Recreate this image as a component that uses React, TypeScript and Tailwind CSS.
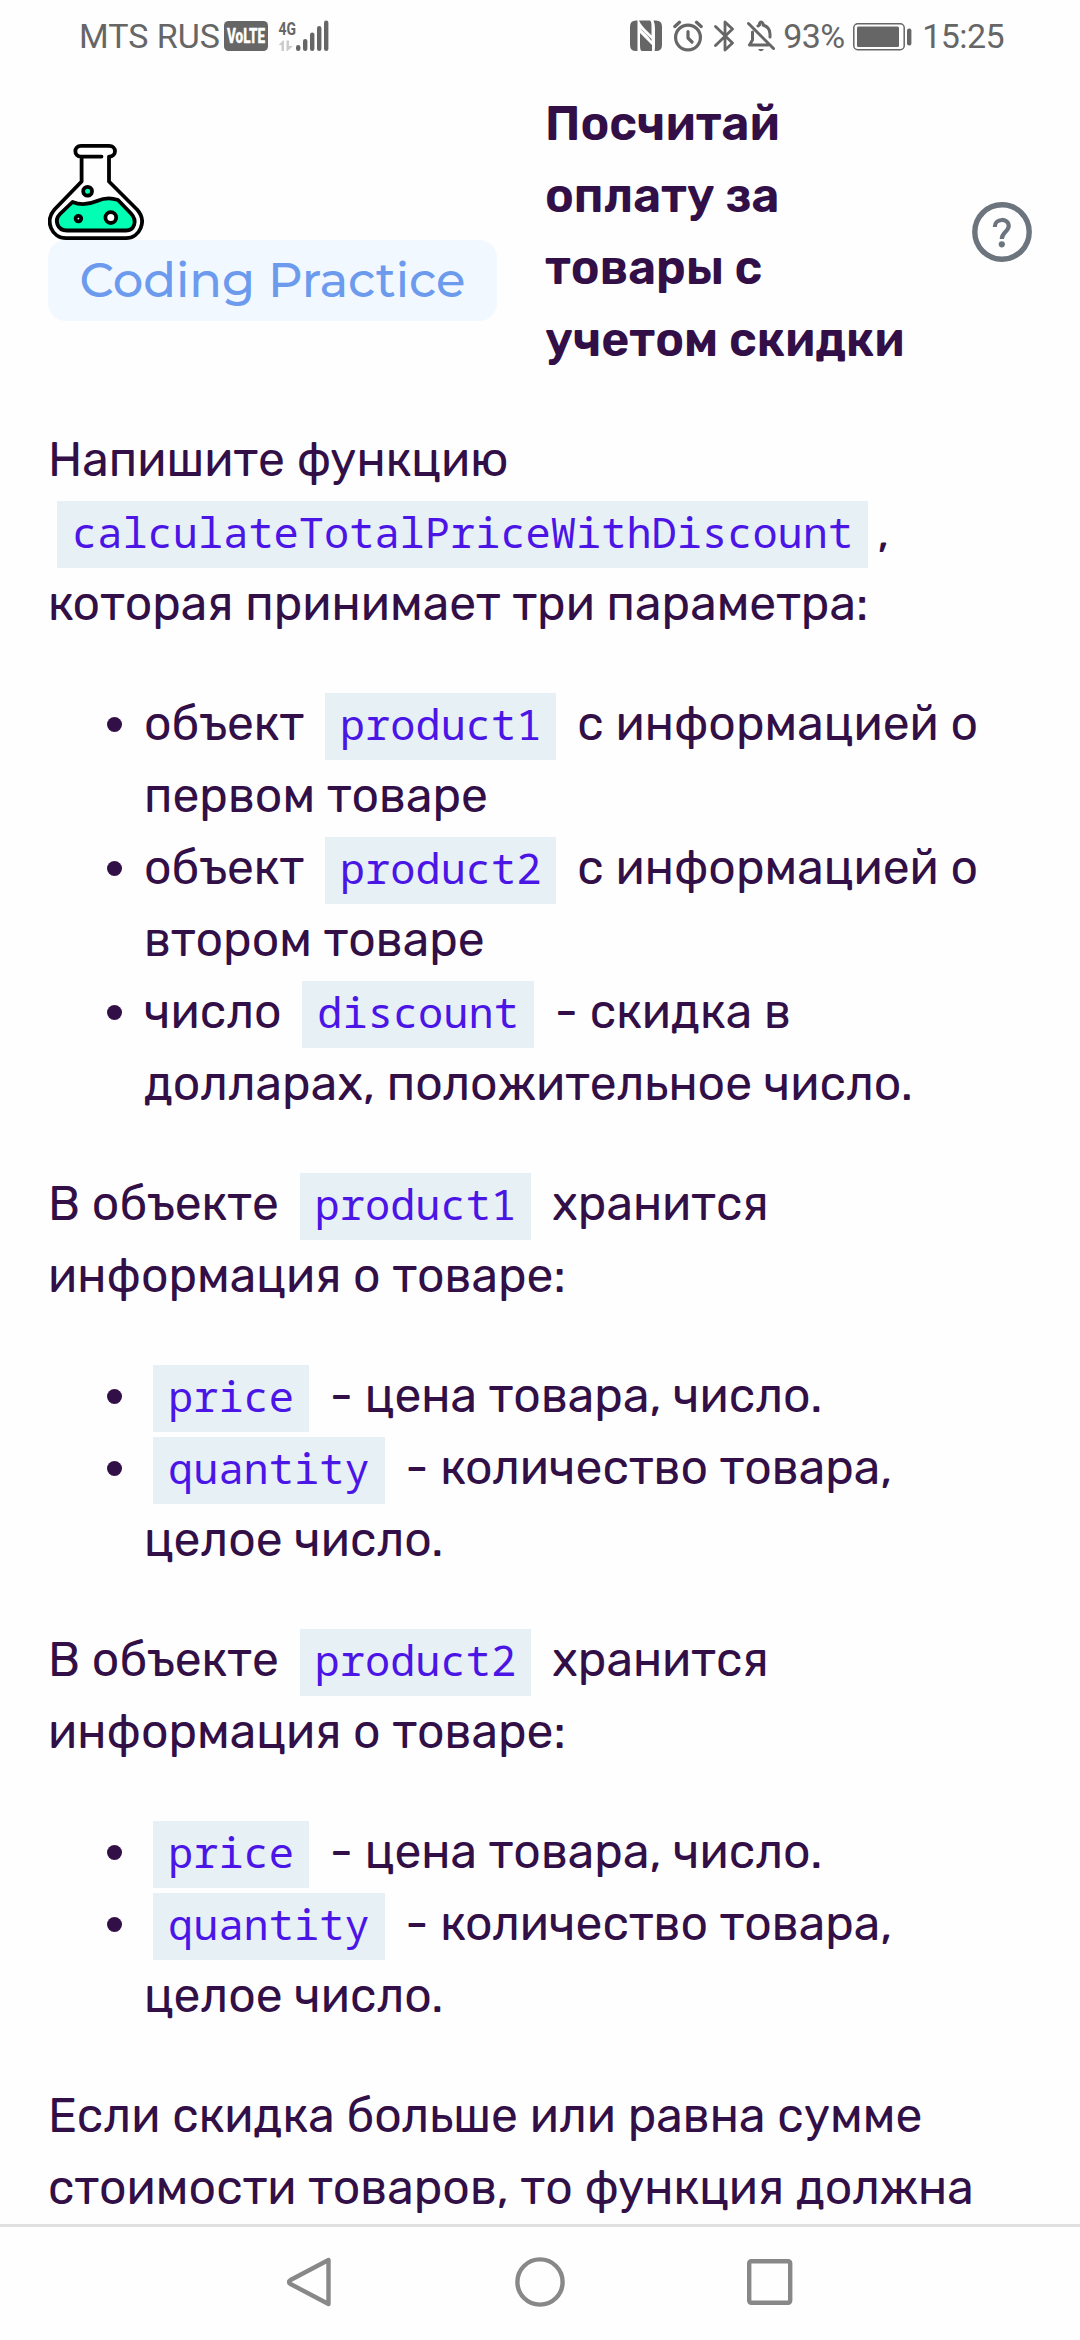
function Code({ children }: { children: string }) {
  return (
    <code className="mx-[9px] bg-[#e7f0f5] px-[15px] pt-[2px] pb-[8px] font-['Noto_Sans_Mono','DejaVu_Sans_Mono',monospace] text-[42px] leading-none text-[#4b15e6]">
      {children}
    </code>
  );
}

function FlaskIcon() {
  return (
    <svg className="h-24 w-24" viewBox="0 0 96 96" fill="none" stroke="#000" strokeWidth="3.8" strokeLinecap="round" strokeLinejoin="round">
      <path d="M24.5 58C34 62 42 60 49 57C57 53.5 63 53.5 70 56L83 69.5C90 77 86 86.5 78 86.5H19C9 86.5 6 76 12 70Z" fill="#00ffb2" />
      <path d="M53.5 12.6H33C25.5 12.6 25.5 1.9 33 1.9H61C69 1.9 69 12.6 61 12.6V37.5L89 65.5C99.5 77 92 94.1 78 94.1H18C3.5 94.1 -3.5 77 6.5 65.5L33.6 37.5V12.6" />
      <circle cx="39.6" cy="47.2" r="4.4" fill="#00ffb2" />
      <circle cx="30.4" cy="74.6" r="2.8" fill="#fff" />
      <circle cx="62.8" cy="73.6" r="5.4" fill="#fff" />
    </svg>
  );
}

function StatusBar() {
  return (
    <div className="flex h-[72px] shrink-0 items-center justify-between pr-[76px] pl-[79px] font-['Roboto',sans-serif] text-[34px] text-[#666]">
      <div className="flex h-full items-center">
        <span className="w-[145px] whitespace-nowrap">MTS RUS</span>
        <svg className="h-[30px] w-[44px]" viewBox="0 0 44 30">
          <rect width="44" height="30" rx="4.5" fill="#666" />
          <text x="3" y="22" fill="#fff" stroke="#fff" strokeWidth="0.4" fontFamily="Roboto" fontWeight="800" fontSize="19.5" textLength="38" lengthAdjust="spacingAndGlyphs">VoLTE</text>
        </svg>
        <svg className="ml-[10px] h-[32px] w-[52px] overflow-visible" viewBox="0 0 52 32" fill="#666">
          <text x="0.5" y="14.5" fontFamily="Roboto" fontWeight="700" fontSize="18.5" textLength="17.5" lengthAdjust="spacingAndGlyphs">4G</text>
          <path d="M0.5 25L5 20.5H6V31H3.5V25ZM8.5 20.5H11V26H15L9.5 31H8.5Z" fill="#ccc" />
          <rect x="18" y="25" width="4.4" height="6" rx="2.2" />
          <rect x="25" y="19" width="4.4" height="12" rx="2.2" />
          <rect x="32" y="12.5" width="4.4" height="18.5" rx="2.2" />
          <rect x="39" y="6" width="4.4" height="25" rx="2.2" />
          <rect x="46" y="0.5" width="4.4" height="30.5" rx="2.2" />
        </svg>
      </div>
      <div className="flex h-full items-center">
        <svg className="h-[32px] w-[32px]" viewBox="0 0 32 32" fill="#666">
          <path d="M6 0.5H7.5V31H6Q0 31 0 25V6.5Q0 0.5 6 0.5Z" />
          <path d="M9 0.5C11.5 6 15 8.5 21.5 15.5V6C21.5 3 21 1.500 20 0.5Z" />
          <path d="M10 8C13 12 18 15 21.5 21V19L10 8ZM10 13L22 25V31H12Q10 31 10 25Z" />
          <path d="M23.5 0.5H26Q32 0.5 32 6.5V25Q32 31 26 31H24.5Q25 30 25 25V8Q25 4 23.5 0.5Z" />
        </svg>
        <svg className="ml-[11px] h-[32px] w-[30px]" viewBox="0 0 30 32" fill="none" stroke="#666" strokeWidth="3.2" strokeLinecap="round" strokeLinejoin="round">
          <circle cx="15" cy="17.5" r="12.4" />
          <path d="M15 11.5V18L19 22M1.8 6.5L6.5 2.3M28.2 6.5L23.5 2.3" />
        </svg>
        <svg className="ml-[11px] h-[32px] w-[21px]" viewBox="0 0 21 32" fill="none" stroke="#666" strokeWidth="2.8" strokeLinecap="round" strokeLinejoin="round">
          <path d="M1.5 6.5L18.5 23L11 30V2L18.5 9L1.5 25.5" />
        </svg>
        <svg className="ml-[12px] h-[32px] w-[28px]" viewBox="0 0 28 32" fill="none" stroke="#666" strokeWidth="3" strokeLinecap="round" strokeLinejoin="round">
          <path d="M1.5 3.5L26.5 28.5M5.5 12V20L2.5 25H21M11 6L12.5 5V3.5Q14 0.5 16 3.5V5C21 6.5 23 9.5 23 14V17" />
          <path d="M11 29H17Q14 33.5 11 29Z" fill="#666" stroke="none" />
        </svg>
        <span className="ml-[8px] w-[70px] tracking-[-0.6px]">93%</span>
        <svg className="h-[32px] w-[59px]" viewBox="0 0 59 32">
          <rect x="0.8" y="3.8" width="50.4" height="25.9" rx="4" fill="none" stroke="#666" strokeWidth="1.5" />
          <rect x="4" y="6.5" width="42" height="20.5" rx="1.5" fill="#666" />
          <rect x="54" y="8.5" width="4.4" height="17" rx="2" fill="#666" />
        </svg>
        <span className="ml-[10px] tracking-[-0.6px]">15:25</span>
      </div>
    </div>
  );
}

function ProductInfo({ name }: { name: string }) {
  return (
    <>
      <p>
        В объекте <Code>{name}</Code> хранится
        <br />
        информация о товаре:
      </p>
      <ul className="list-disc pl-24">
        <li>
          <Code>price</Code> - цена товара, число.
        </li>
        <li>
          <Code>quantity</Code> - количество товара,
          <br />
          целое число.
        </li>
      </ul>
    </>
  );
}

export default function App() {
  return (
    <div className="flex h-[2340px] w-[1080px] flex-col overflow-hidden bg-[#fefefe] font-['Rubik','Roboto',sans-serif] text-[48px] leading-[72px] text-[#321047]">
      <StatusBar />
      <main className="flex min-h-0 flex-1 flex-col overflow-hidden px-12 pt-4">
        <header className="flex shrink-0 items-center">
          <div className="w-[449px] shrink-0">
            <FlaskIcon />
            <div className="flex h-[81px] items-center justify-center rounded-[18px] bg-[#f2f8ff] font-['Montserrat','Inter',sans-serif] font-medium whitespace-nowrap text-[#6c9bee]">
              Coding Practice
            </div>
          </div>
          <h1 className="ml-12 flex-1 font-semibold">
            Посчитай
            <br />
            оплату за
            <br />
            товары с
            <br />
            учетом скидки
          </h1>
          <svg className="h-[60px] w-[60px] shrink-0" viewBox="0 0 60 60" fill="none" stroke="#6c757d">
            <circle cx="30" cy="30" r="27.2" strokeWidth="5.4" />
            <path d="M22.8 25C22.8 15.800 36.7 15.8 36.7 24C36.7 29.500 29.8 30 29.800 37" strokeWidth="4.2" />
            <circle cx="29.8" cy="42.3" r="3.1" fill="#6c757d" stroke="none" />
          </svg>
        </header>
        <article className="mt-12 flex shrink-0 flex-col gap-12 whitespace-nowrap">
          <p>
            Напишите функцию
            <br />
            <Code>calculateTotalPriceWithDiscount</Code>,
            <br />
            которая принимает три параметра:
          </p>
          <ul className="list-disc pl-24">
            <li>
              объект <Code>product1</Code> с информацией о
              <br />
              первом товаре
            </li>
            <li>
              объект <Code>product2</Code> с информацией о
              <br />
              втором товаре
            </li>
            <li>
              число <Code>discount</Code> - скидка в
              <br />
              долларах, положительное число.
            </li>
          </ul>
          <ProductInfo name="product1" />
          <ProductInfo name="product2" />
          <p>
            Если скидка больше или равна сумме
            <br />
            стоимости товаров, то функция должна
          </p>
        </article>
      </main>
      <nav className="flex h-[116px] shrink-0 items-center justify-center gap-[182px] border-t-[3px] border-[#e0e0e0] pb-[3px]">
        <svg className="h-[50px] w-[46px]" viewBox="0 0 46 50" fill="none" stroke="#888" strokeWidth="4.4" strokeLinejoin="round">
          <path d="M41.5 3V47L3.5 27Q0.5 25 3.5 23Z" />
        </svg>
        <svg className="h-[50px] w-[50px]" viewBox="0 0 50 50" fill="none" stroke="#888" strokeWidth="4.4">
          <circle cx="25" cy="25" r="22.6" />
        </svg>
        <svg className="h-[46px] w-[46px]" viewBox="0 0 46 46" fill="none" stroke="#888" strokeWidth="4.4">
          <rect x="2.2" y="2.2" width="41" height="41.6" rx="2" />
        </svg>
      </nav>
    </div>
  );
}
